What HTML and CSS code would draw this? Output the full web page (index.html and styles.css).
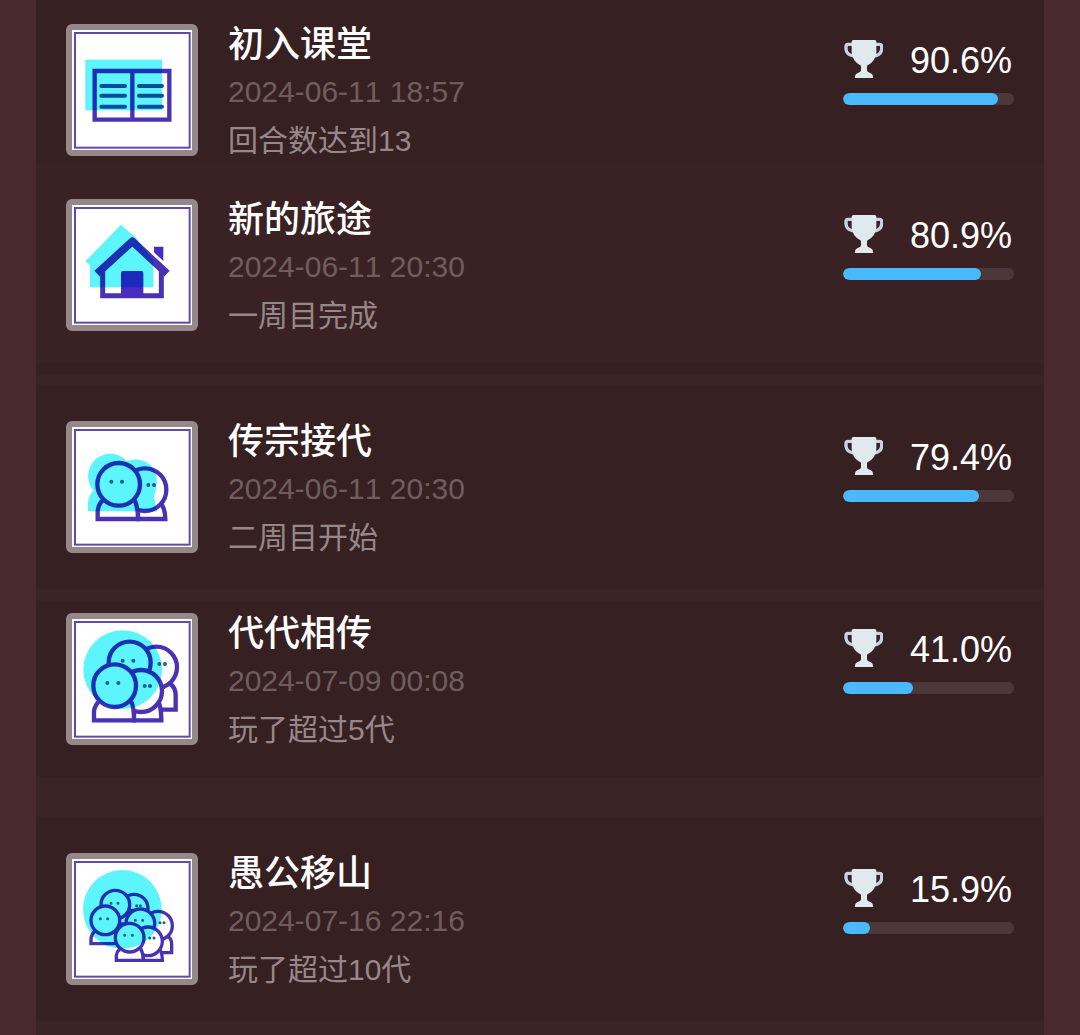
FILE: index.html
```html
<!DOCTYPE html>
<html lang="zh-CN">

<head>
    <meta charset="UTF-8">
    <meta name="viewport" content="width=device-width, initial-scale=1.0">
    <title>成就</title>
    <link rel="stylesheet" href="styles.css">
</head>

<body>
    <svg class="sprite" aria-hidden="true">
        <symbol id="trophy" viewBox="39 30 120 117">
            <path d="M68 43 H54 Q48 43 48 50 V57 Q49 75 72 78 M135 43 H149 Q155 43 155 50 V57 Q154 75 131 78" fill="none" stroke="#c9d2e3" stroke-width="10"></path>
            <path d="M70 30 H134 Q139 30 139 35 V66 Q138 94 111 107 V121 Q111 126 119 128 Q129 131 129 140 V144 H75 V140 Q75 131 85 128 Q93 126 93 121 V107 Q66 94 65 66 V35 Q65 30 70 30 Z" fill="#e0e9ed"></path>
        </symbol>
    </svg>

    <main class="panel">
        <article class="item item-first">
            <div class="badge">
                <svg viewBox="48 48 360 360">
                    <rect class="frame" x="57" y="57" width="344" height="344"></rect>
                    <rect class="tint" x="88" y="137" width="230" height="152"></rect>
                    <g class="ink">
                        <path d="M116 171 H340 V317 H116 Z M229 171 V317" stroke-width="13"></path>
                        <path d="M136 216 H207 M136 245 H207 M136 278 H207 M249 216 H318 M249 245 H318 M249 278 H318" stroke="#0f4f9f" stroke-width="12" stroke-linecap="round"></path>
                    </g>
                </svg>
            </div>
            <div class="info">
                <h2>初入课堂</h2>
                <time>2024-06-11 18:57</time>
                <p>回合数达到13</p>
            </div>
            <div class="stat">
                <div class="rate">
                    <svg><use href="#trophy"></use></svg>
                    <span>90.6%</span>
                </div>
                <progress value="90.6" max="100" aria-label="初入课堂"></progress>
            </div>
        </article>

        <article class="item item-plain">
            <div class="badge">
                <svg viewBox="48 45 360 360">
                    <rect class="frame" x="57" y="54" width="344" height="344"></rect>
                    <path class="tint" d="M195 104 L238 142 L292 210 V292 H102 V225 L88 214 Z"></path>
                    <g class="ink">
                        <path d="M294 170 H322 V213 L294 187 Z" fill="#4a2bc0" stroke="none"></path>
                        <path d="M140 240 V317 H316 V240" fill="none" stroke-width="15"></path>
                        <path d="M123 251 L229 154 L333 251" fill="none" stroke-width="23" stroke-linejoin="round"></path>
                        <path d="M201 243 H257 Q262 243 262 249 V320 H195 V249 Q195 243 201 243 Z" fill="#4a2bc0" stroke="none"></path>
                    </g>
                </svg>
            </div>
            <div class="info">
                <h2>新的旅途</h2>
                <time>2024-06-11 20:30</time>
                <p>一周目完成</p>
            </div>
            <div class="stat">
                <div class="rate">
                    <svg><use href="#trophy"></use></svg>
                    <span>80.9%</span>
                </div>
                <progress value="80.9" max="100" aria-label="新的旅途"></progress>
            </div>
        </article>

        <article class="item item-third">
            <div class="badge">
                <svg viewBox="45 45 360 360">
                    <rect class="frame" x="54" y="54" width="344" height="344"></rect>
                    <path class="tint" d="M93 298 V272 Q96 246 110 236 A65 65 0 1 1 210 148 A64 64 0 0 1 294 178 Q306 214 291 252 L300 298 Z"></path>
                    <g class="ink">
                        <path d="M243 321 V272 H308 Q324 284 325 321 Z"></path>
                        <circle cx="264" cy="233" r="64"></circle>
                        <path d="M122 321 V300 Q123 274 143 260 H230 Q243 280 243 321 Z"></path>
                        <circle cx="185" cy="217" r="64"></circle>
                    </g>
                    <path class="eyes" d="M163 209 h0 M195 209 h0 M274 219 h0 M291 219 h0"></path>
                </svg>
            </div>
            <div class="info">
                <h2>传宗接代</h2>
                <time>2024-06-11 20:30</time>
                <p>二周目开始</p>
            </div>
            <div class="stat">
                <div class="rate">
                    <svg><use href="#trophy"></use></svg>
                    <span>79.4%</span>
                </div>
                <progress value="79.4" max="100" aria-label="传宗接代"></progress>
            </div>
        </article>

        <article class="item item-fourth">
            <div class="badge">
                <svg viewBox="46 45 360 360">
                    <rect class="frame" x="55" y="54" width="344" height="344"></rect>
                    <circle class="tint" cx="198" cy="197" r="118"></circle>
                    <g class="ink">
                        <path d="M280 317 V240 H342 Q357 252 357 275 V317 Z"></path>
                        <circle cx="299" cy="190" r="62"></circle>
                        <circle cx="219" cy="176" r="63"></circle>
                        <path d="M232 349 V300 H308 Q314 318 314 349 Z"></path>
                        <circle cx="253" cy="261" r="63"></circle>
                        <path d="M112 349 V322 Q114 303 130 290 H222 Q232 305 232 349 Z"></path>
                        <circle cx="174" cy="245" r="64"></circle>
                    </g>
                    <path class="eyes" d="M198 170 h0 M230 170 h0 M308 180 h0 M325 180 h0 M152 237 h0 M185 237 h0 M264 246 h0 M280 246 h0"></path>
                </svg>
            </div>
            <div class="info">
                <h2>代代相传</h2>
                <time>2024-07-09 00:08</time>
                <p>玩了超过5代</p>
            </div>
            <div class="stat">
                <div class="rate">
                    <svg><use href="#trophy"></use></svg>
                    <span>41.0%</span>
                </div>
                <progress value="41" max="100" aria-label="代代相传"></progress>
            </div>
        </article>

        <article class="item item-last">
            <div class="badge">
                <svg viewBox="48 45 360 360">
                    <rect class="frame" x="57" y="54" width="344" height="344"></rect>
                    <circle class="tint" cx="199" cy="196" r="118"></circle>
                    <g class="ink ink-thin">
                        <circle cx="234" cy="193" r="42"></circle>
                        <path d="M184 240 V199 H236 V240 Z"></path>
                        <circle cx="178" cy="182" r="43"></circle>
                        <path d="M290 326 V278 H336 Q347 285 347 300 V326 Z"></path>
                        <circle cx="306" cy="245" r="43"></circle>
                        <circle cx="253" cy="238" r="43"></circle>
                        <path d="M105 299 V284 Q107 270 116 262 H184 V299 Z"></path>
                        <circle cx="148" cy="229" r="43"></circle>
                        <path d="M262 349 V315 H310 Q319 325 319 349 Z"></path>
                        <circle cx="276" cy="292" r="43"></circle>
                        <path d="M181 349 V334 Q183 322 192 314 H254 Q262 328 262 349 Z"></path>
                        <circle cx="221" cy="281" r="43"></circle>
                    </g>
                    <path class="eyes eyes-small" d="M165 178 h0 M186 178 h0 M242 185 h0 M253 185 h0 M133 224 h0 M155 224 h0 M238 229 h0 M260 229 h0 M312 236 h0 M324 236 h0 M206 274 h0 M229 274 h0 M281 282 h0 M294 282 h0"></path>
                </svg>
            </div>
            <div class="info">
                <h2>愚公移山</h2>
                <time>2024-07-16 22:16</time>
                <p>玩了超过10代</p>
            </div>
            <div class="stat">
                <div class="rate">
                    <svg><use href="#trophy"></use></svg>
                    <span>15.9%</span>
                </div>
                <progress value="15.9" max="100" aria-label="愚公移山"></progress>
            </div>
        </article>
    </main>
</body>

</html>
```
FILE: styles.css
```css
* {
    box-sizing: border-box;
    font-family: "Liberation Sans", "Noto Sans CJK SC", sans-serif;
}

body {
    margin: 0;
    background: #482a2c;
}

.sprite {
    display: none;
}

.panel {
    min-height: 100vh;
    margin: 0 36px;
    background: #3b2224;
}

.item {
    display: flex;
    align-items: flex-start;
    gap: 30px;
    padding: 36px 30px;
    background: #362022;
}

.item-first {
    padding-top: 24px;
    padding-bottom: 8px;
}

.item-plain {
    padding-bottom: 32px;
    padding-top: 35px;
    background: #3a2224;
    border-bottom: 12px solid #362022;
}

.item-third {
    margin-top: 10px;
}

.item-fourth {
    margin-top: 12px;
    padding-top: 12px;
    padding-bottom: 32px;
}

.item-last {
    margin-top: 40px;
}

.badge {
    flex: none;
    width: 132px;
    height: 132px;
    border: 6px solid #94888a;
    border-radius: 6px;
    background: #94888a;
}

.badge svg {
    display: block;
    width: 100%;
    height: 100%;
    background: #fff;
    isolation: isolate;
}

.frame {
    fill: none;
    stroke: #6549a8;
    stroke-width: 6;
}

.tint {
    fill: #5cf4fd;
}

/* the outlines darken to blue where they cross the tint */
.ink {
    fill: #fff;
    stroke: #4a32b4;
    stroke-width: 13;
    mix-blend-mode: multiply;
}

.ink-thin {
    stroke-width: 10;
}

.eyes {
    fill: none;
    stroke: #17608c;
    stroke-width: 12;
    stroke-linecap: round;
}

.eyes-small {
    stroke-width: 9;
}

.info {
    flex: 1;
    min-width: 0;
}

.info h2 {
    margin: 0;
    font-size: 36px;
    font-weight: 500;
    line-height: 42px;
    color: #fff;
}

.info time {
    display: block;
    margin-top: 10px;
    font-size: 30px;
    font-kerning: none;
    line-height: 32px;
    color: #6f5d5f;
}

.info p {
    margin: 18px 0 0;
    font-size: 30px;
    line-height: 30px;
    color: #96888a;
}

.stat {
    flex: none;
    width: 171px;
    padding-top: 16px;
}

.rate {
    display: flex;
    align-items: flex-start;
    justify-content: space-between;
    padding-right: 2px;
    font-size: 36px;
    line-height: 42px;
    color: #fff;
}

.rate svg {
    width: 40px;
    height: 39px;
}

progress {
    display: block;
    width: 100%;
    height: 12px;
    margin-top: 11px;
    border: none;
    border-radius: 6px;
    background: #4c383a;
    overflow: hidden;
    appearance: none;
    -webkit-appearance: none;
}

progress::-webkit-progress-bar {
    background: #4c383a;
    border-radius: 6px;
}

progress::-webkit-progress-value {
    background: #4ab9fc;
    border-radius: 6px;
}
```
